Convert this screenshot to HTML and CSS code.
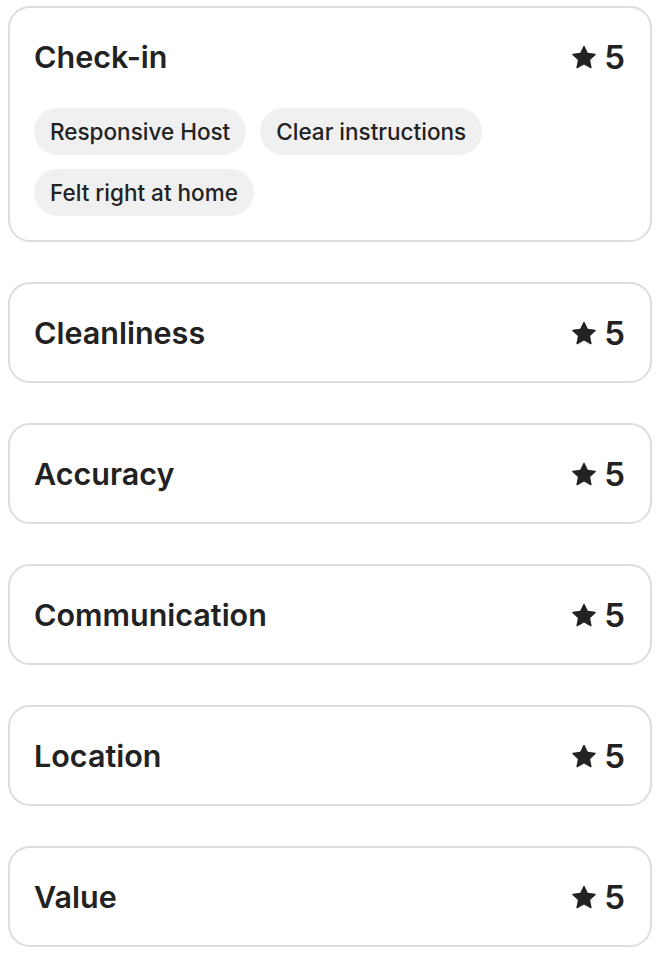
FILE: index.html
```html
<!DOCTYPE html>
<html lang="en">
<head>
    <meta charset="UTF-8">
    <meta name="viewport" content="width=device-width, initial-scale=1.0">
    <title>Ratings</title>
    <link rel="stylesheet" href="styles.css">
</head>
<body>
    <div class="ratings">
        <div class="card">
            <div class="card-head">
                <span class="card-title">Check-in</span>
                <span class="score"><svg class="star" viewBox="0 0 32 32"><path d="M15.1 1.58l-4.13 8.88-9.86 1.27a1 1 0 0 0-.54 1.74l7.3 6.57-1.97 9.85a1 1 0 0 0 1.48 1.06l8.62-5 8.63 5a1 1 0 0 0 1.48-1.06l-1.970-9.85 7.3-6.57a1 1 0 0 0-.55-1.73l-9.86-1.28-4.12-8.88a1 1 0 0 0-1.82 0z"/></svg>5</span>
            </div>
            <div class="tags">
                <span class="tag">Responsive Host</span>
                <span class="tag">Clear instructions</span>
                <span class="tag">Felt right at home</span>
            </div>
        </div>

        <div class="card">
            <div class="card-head">
                <span class="card-title">Cleanliness</span>
                <span class="score"><svg class="star" viewBox="0 0 32 32"><path d="M15.1 1.58l-4.13 8.88-9.86 1.27a1 1 0 0 0-.54 1.74l7.3 6.57-1.97 9.85a1 1 0 0 0 1.48 1.06l8.62-5 8.63 5a1 1 0 0 0 1.48-1.06l-1.97-9.85 7.3-6.57a1 1 0 0 0-.55-1.73l-9.86-1.28-4.12-8.88a1 1 0 0 0-1.82 0z"/></svg>5</span>
            </div>
        </div>

        <div class="card">
            <div class="card-head">
                <span class="card-title">Accuracy</span>
                <span class="score"><svg class="star" viewBox="0 0 32 32"><path d="M15.1 1.58l-4.13 8.88-9.86 1.27a1 1 0 0 0-.54 1.74l7.3 6.57-1.97 9.85a1 1 0 0 0 1.48 1.06l8.62-5 8.63 5a1 1 0 0 0 1.48-1.06l-1.97-9.85 7.3-6.57a1 1 0 0 0-.55-1.73l-9.86-1.28-4.12-8.88a1 1 0 0 0-1.82 0z"/></svg>5</span>
            </div>
        </div>

        <div class="card">
            <div class="card-head">
                <span class="card-title">Communication</span>
                <span class="score"><svg class="star" viewBox="0 0 32 32"><path d="M15.1 1.58l-4.13 8.88-9.86 1.27a1 1 0 0 0-.54 1.74l7.3 6.57-1.97 9.85a1 1 0 0 0 1.48 1.06l8.62-5 8.63 5a1 1 0 0 0 1.48-1.06l-1.97-9.85 7.3-6.57a1 1 0 0 0-.55-1.73l-9.86-1.28-4.12-8.88a1 1 0 0 0-1.82 0z"/></svg>5</span>
            </div>
        </div>

        <div class="card">
            <div class="card-head">
                <span class="card-title">Location</span>
                <span class="score"><svg class="star" viewBox="0 0 32 32"><path d="M15.1 1.58l-4.13 8.88-9.86 1.27a1 1 0 0 0-.54 1.74l7.3 6.57-1.97 9.85a1 1 0 0 0 1.48 1.06l8.62-5 8.63 5a1 1 0 0 0 1.48-1.06l-1.97-9.85 7.3-6.57a1 1 0 0 0-.55-1.73l-9.86-1.28-4.12-8.88a1 1 0 0 0-1.82 0z"/></svg>5</span>
            </div>
        </div>

        <div class="card">
            <div class="card-head">
                <span class="card-title">Value</span>
                <span class="score"><svg class="star" viewBox="0 0 32 32"><path d="M15.1 1.58l-4.13 8.88-9.86 1.27a1 1 0 0 0-.54 1.74l7.3 6.57-1.97 9.85a1 1 0 0 0 1.48 1.06l8.62-5 8.63 5a1 1 0 0 0 1.48-1.06l-1.97-9.85 7.3-6.57a1 1 0 0 0-.55-1.73l-9.86-1.28-4.12-8.88a1 1 0 0 0-1.82 0z"/></svg>5</span>
            </div>
        </div>
    </div>
</body>
</html>
```

FILE: styles.css
```css
body {
    font-family: Inter, "Noto Sans", sans-serif;
    color: #222222;
    background: #ffffff;
    margin: 0;
}
.ratings {
    display: flex;
    flex-direction: column;
    gap: 40px;
    padding: 6px 8px 0 8px;
}
.card {
    border: 2px solid #dddddd;
    border-radius: 22px;
    padding: 30px 25px 30px 24px;
}
.card-head {
    display: flex;
    justify-content: space-between;
    align-items: center;
    height: 37px;
}
.card-title {
    font-size: 30.5px;
    font-weight: 600;
}
.score {
    display: flex;
    align-items: center;
    gap: 8px;
    font-size: 33px;
    font-weight: 600;
}
.star {
    width: 24px;
    height: 24px;
    fill: #222222;
}
.tags {
    display: flex;
    flex-wrap: wrap;
    gap: 14px;
    margin: 33px 0 -6px 0;
}
.tag {
    background: #f0f0f0;
    border-radius: 24px;
    height: 47px;
    padding: 0 16px;
    display: flex;
    align-items: center;
    font-size: 22.5px;
    font-weight: 500;
}
```
